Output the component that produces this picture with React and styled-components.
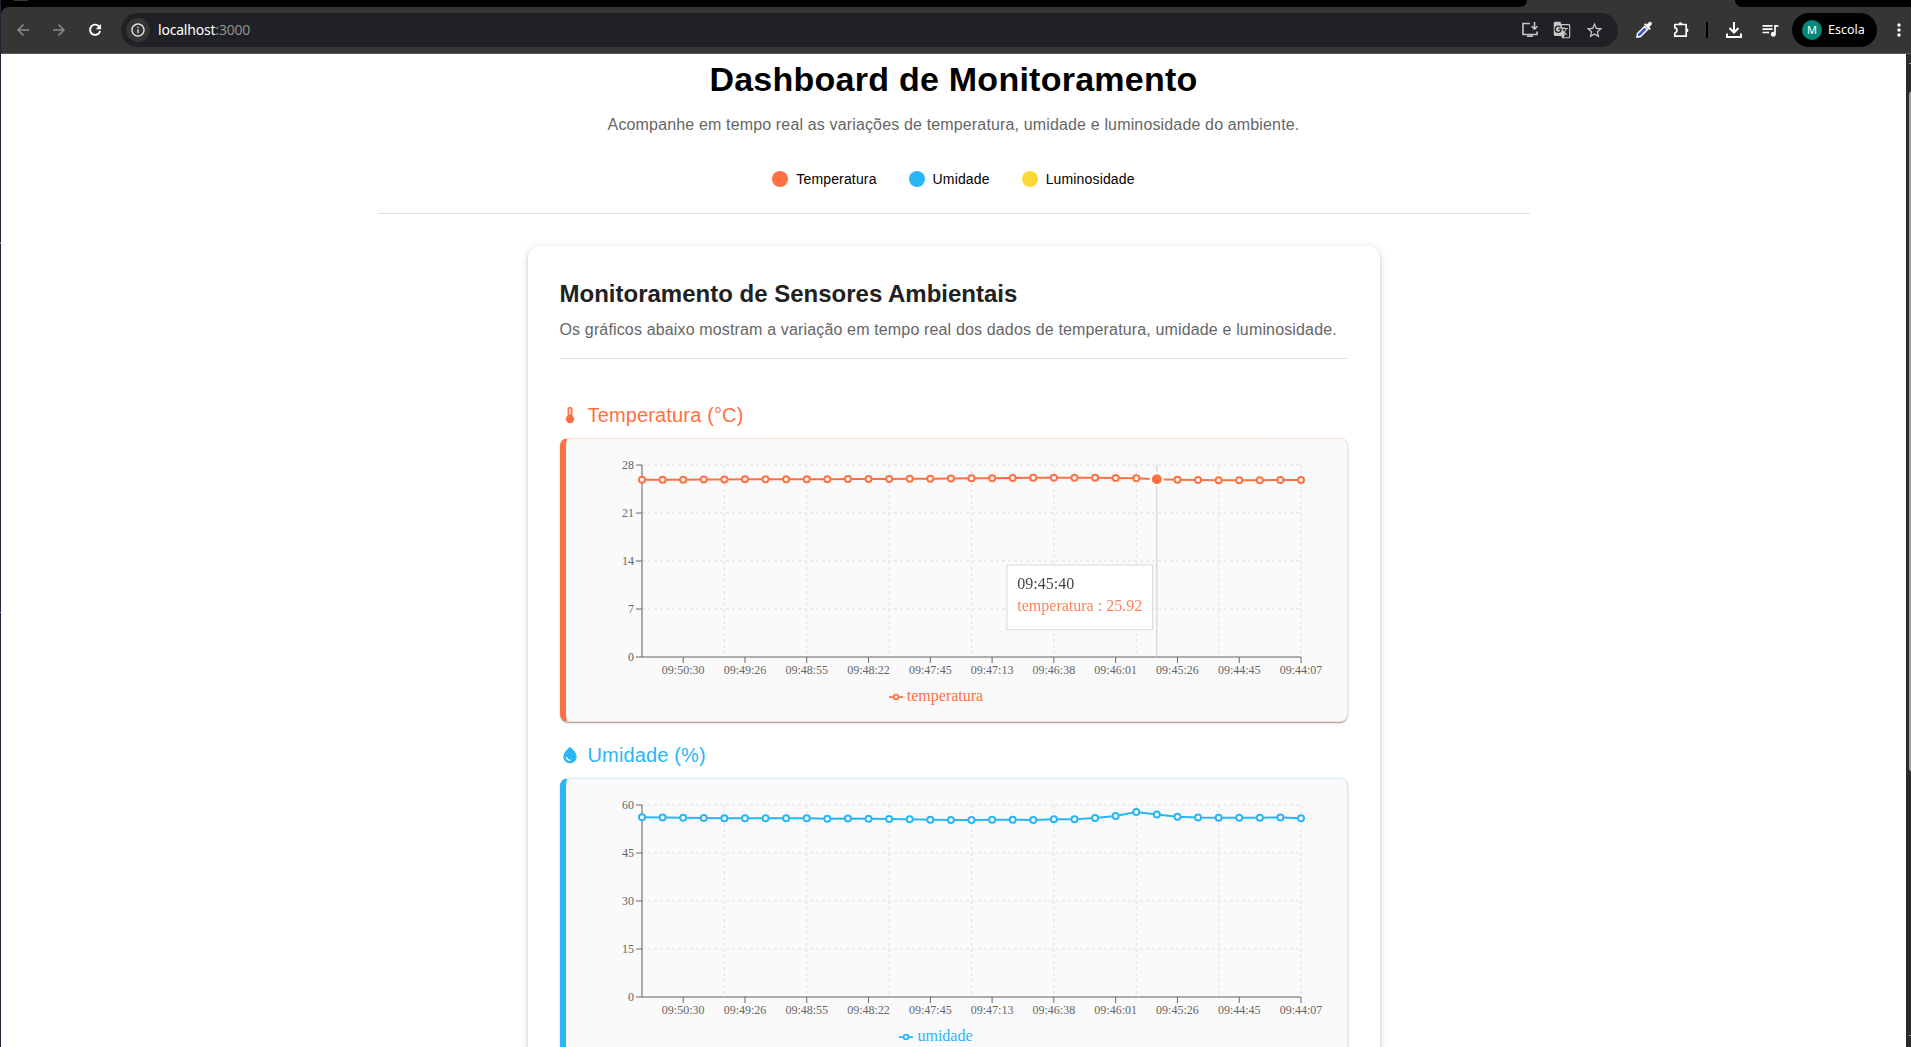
import React from "react";
import styled, { createGlobalStyle } from "styled-components";
import {
  MdArrowBack, MdArrowForward, MdInfoOutline, MdGTranslate, MdStarBorder,
  MdQueueMusic, MdMoreVert,
} from "react-icons/md";

const GlobalStyle = createGlobalStyle`
  * { box-sizing: border-box; }
  body { margin: 0; background: #fff; overflow: hidden; }
`;

const sans = `"Liberation Sans", Arial, sans-serif`;
const serif = `"Liberation Serif", "Times New Roman", serif`;
const ui = `"Noto Sans", sans-serif`;

const Desktop = styled.div`
  width: 1911px;
  height: 1047px;
  display: flex;
  background: #252336;
  overflow: hidden;
`;

const DesktopEdge = styled.div`
  width: 1px;
  display: flex;
  flex-direction: column;
  flex: none;
`;

const EdgeMark = styled.i`
  height: ${(p) => p.$h}px;
  margin-top: ${(p) => p.$gap}px;
  background: ${(p) => p.$color};
`;

const Window = styled.div`
  flex: 1;
  display: flex;
  flex-direction: column;
  min-width: 0;
`;

const TabStrip = styled.div`
  height: 7px;
  flex: none;
  display: flex;
  background: #353535;
`;

const StripPart = styled.div`
  width: ${(p) => p.$w};
  flex: ${(p) => (p.$w ? "none" : 1)};
  background: #000;
  border-radius: ${(p) => p.$radius};
`;

const TabHighlight = styled.div`
  width: 14px;
  height: 1px;
  margin-left: 13px;
  background: #3a3a3a;
`;

const StripGap = styled.div`
  width: 208px;
`;

const ToolbarBase = styled.div`
  height: 47px;
  flex: none;
  background: #000;
`;

const Toolbar = styled.div`
  height: 47px;
  display: flex;
  align-items: center;
  background: #353535;
  border-bottom: 1px solid #5c5c5c;
  border-top-left-radius: 8px;
  padding-left: 12px;
  color: #fff;
`;

const NavIcon = styled.span`
  display: flex;
  justify-content: center;
  width: 20px;
  margin-right: ${(p) => p.$after}px;
  color: ${(p) => (p.$dim ? "#8a8a8a" : "#fff")};
`;

const AddressBar = styled.div`
  width: 1497px;
  height: 34px;
  display: flex;
  align-items: center;
  gap: 14px;
  padding: 0 14px 0 5px;
  background: #202125;
  border-radius: 17px;
  color: #c7c7c7;
`;

const SiteInfo = styled.span`
  width: 24px;
  height: 24px;
  display: flex;
  align-items: center;
  justify-content: center;
  border-radius: 50%;
  background: #353535;
  color: #e8e8e8;
`;

const Url = styled.span`
  flex: 1;
  margin-left: -6px;
  font: 14px/20px ${ui};
  letter-spacing: -0.2px;
  color: #fff;
`;

const Port = styled.span`
  color: #909090;
`;

const BarIcon = styled.span`
  width: 20px;
  display: flex;
  justify-content: center;
  margin-left: ${(p) => p.$before}px;
  flex: none;
`;

const Separator = styled.span`
  width: 2px;
  height: 16px;
  margin-left: 15px;
  background: #000;
`;

const Profile = styled.div`
  width: 85px;
  height: 34px;
  margin-left: 12px;
  display: flex;
  align-items: center;
  gap: 6px;
  padding-left: 10px;
  background: #000;
  border-radius: 17px;
  font: 12.5px/20px ${ui};
`;

const Avatar = styled.span`
  width: 20px;
  height: 20px;
  border-radius: 50%;
  background: #00897b;
  text-align: center;
  font: 11px/20px ${ui};
`;

const Viewport = styled.div`
  flex: 1;
  min-height: 0;
  display: flex;
`;

const Page = styled.main`
  flex: 1;
  height: 993px;
  overflow: hidden;
  background: #fff;
  font-family: ${sans};
`;

const Scrollbar = styled.div`
  width: 5px;
  padding: 9px 0 0 3px;
  background: #2b2b2b;
  overflow: hidden;
`;

const ArrowHint = styled.div`
  width: 2px;
  height: 1px;
  margin-top: ${(p) => p.$gap}px;
  background: #9f9f9f;
`;

const Thumb = styled.div`
  width: 10px;
  height: 681px;
  margin-top: 27px;
  border-radius: 4px;
  background: #9f9f9f;
`;

const Header = styled.header`
  width: 1152px;
  margin: 0 auto;
  padding-top: 4px;
  text-align: center;
  border-bottom: 1px solid #e0e0e0;
  height: 160px;
`;

const Title = styled.h1`
  margin: 0;
  font-size: 34px;
  line-height: 42px;
  font-weight: 700;
  letter-spacing: 0.00735em;
  color: #000;
`;

const Subtitle = styled.p`
  margin: 13px 0 0;
  font-size: 16px;
  line-height: 24px;
  letter-spacing: 0.00938em;
  color: #666;
`;

const Legend = styled.div`
  display: flex;
  justify-content: center;
  gap: 32px;
  margin-top: 32px;
`;

const LegendItem = styled.div`
  display: flex;
  align-items: center;
  gap: 8px;
  font-size: 14px;
  line-height: 20px;
  letter-spacing: 0.01071em;
  color: #000;
`;

const Swatch = styled.span`
  width: 16px;
  height: 16px;
  border-radius: 50%;
  background: ${(p) => p.$color};
`;

const Card = styled.section`
  width: 852px;
  height: 1200px;
  margin: 32px auto 0;
  padding: 32px;
  border-radius: 12px;
  background: #fff;
  box-shadow: 0 3px 3px -2px rgba(0, 0, 0, 0.2), 0 3px 4px rgba(0, 0, 0, 0.14), 0 1px 8px rgba(0, 0, 0, 0.12);
`;

const CardTitle = styled.h2`
  margin: 0;
  font-size: 24px;
  line-height: 32px;
  font-weight: 700;
  color: #212121;
`;

const CardText = styled.p`
  margin: 8px 0 16px;
  font-size: 16px;
  line-height: 24px;
  letter-spacing: 0.00938em;
  color: #666;
`;

const Rule = styled.hr`
  margin: 0 0 40px;
  border: 0;
  border-top: 1px solid #e0e0e0;
`;

const Sensor = styled.article`
  height: 340px;
`;

const SensorTitle = styled.h3`
  display: flex;
  align-items: center;
  gap: 8px;
  height: 32px;
  margin: 0 0 7px;
  font-size: 20px;
  font-weight: 400;
  letter-spacing: 0.0075em;
  color: ${(p) => p.$color};
`;

const ChartPanel = styled.div`
  position: relative;
  height: 284px;
  padding: 16px;
  background: #fafafa;
  border: 1px solid ${(p) => p.$color}33;
  border-left: 6px solid ${(p) => p.$color};
  border-radius: 8px;
  box-shadow: 0 2px 1px -1px rgba(0, 0, 0, 0.2), 0 1px 1px rgba(0, 0, 0, 0.14), 0 1px 3px rgba(0, 0, 0, 0.12);
`;

const ChartSvg = styled.svg`
  display: block;
  overflow: visible;
  text {
    font: 12px ${serif};
    fill: #666;
  }
`;

const ChartLegend = styled.div`
  display: flex;
  justify-content: center;
  align-items: center;
  width: 719px;
  height: 18px;
  padding-right: 10px;
  font: 16px/18px ${serif};
  color: ${(p) => p.$color};
  svg { margin: 2px 4px 0 0; }
`;

const Tooltip = styled.div`
  position: absolute;
  left: 16px;
  top: 16px;
  transform: translate(424.3px, 109.4px);
  will-change: transform;
  padding: 10px;
  background: #fff;
  border: 1px solid #ccc;
  white-space: nowrap;
  font: 16px/18px ${serif};
  color: rgba(0, 0, 0, 0.75);
`;

const TooltipValue = styled.div`
  padding: 4px 0;
  color: ${(p) => p.$color}e0;
`;

const LABELS = ["09:50:30", "09:49:26", "09:48:55", "09:48:22", "09:47:45", "09:47:13", "09:46:38", "09:46:01", "09:45:26", "09:44:45", "09:44:07"];

const TEMPERATURE = [25.84, 25.84, 25.86, 25.89, 25.89, 25.91, 25.91, 25.93, 25.93, 25.93, 25.96, 25.96, 25.97, 26.0, 26.0, 26.02, 26.06, 26.08, 26.11, 26.13, 26.15, 26.15, 26.13, 26.09, 26.06, 25.92, 25.86, 25.81, 25.79, 25.79, 25.79, 25.81, 25.83];

const HUMIDITY = [56.15, 56.09, 56.04, 55.94, 55.89, 55.83, 55.83, 55.83, 55.83, 55.73, 55.78, 55.68, 55.63, 55.52, 55.42, 55.31, 55.31, 55.42, 55.42, 55.31, 55.52, 55.52, 55.94, 56.56, 57.81, 57.03, 56.35, 56.09, 55.99, 56.04, 56.04, 56.09, 55.88];

const X0 = 60;
const PLOT_W = 659;
const Y0 = 10;
const PLOT_H = 192;
const xAt = (i) => X0 + (PLOT_W * i) / 32;

function Chart({ data, max, color, active }) {
  const yAt = (v) => Y0 + PLOT_H * (1 - v / max);
  const ticks = [0, 1, 2, 3, 4].map((n) => ({ value: (max / 4) * n, y: Y0 + PLOT_H - 48 * n }));
  const points = data.map((v, i) => `${xAt(i)},${yAt(v)}`).join(" ");
  return (
    <ChartSvg width="749" height="232">
      <g stroke="#e0e0e0" strokeDasharray="3 3">
        {ticks.map((t) => <line key={t.y} x1={X0} x2={X0 + PLOT_W} y1={t.y} y2={t.y} />)}
        {[0, 4, 8, 12, 16, 20, 24, 28, 32].map((i) => <line key={i} x1={xAt(i)} x2={xAt(i)} y1={Y0} y2={Y0 + PLOT_H} />)}
      </g>
      <g stroke="#666">
        <line x1={X0} x2={X0 + PLOT_W} y1={202} y2={202} />
        <line x1={X0} x2={X0} y1={Y0} y2={202} />
        {ticks.map((t) => <line key={t.y} x1={54} x2={60} y1={t.y} y2={t.y} />)}
        {LABELS.map((l, n) => <line key={l} x1={xAt(2 + 3 * n)} x2={xAt(2 + 3 * n)} y1={202} y2={208} />)}
      </g>
      {ticks.map((t) => <text key={t.y} x={52} y={t.y} dy="0.355em" textAnchor="end">{t.value}</text>)}
      {LABELS.map((l, n) => <text key={l} x={xAt(2 + 3 * n)} y={210} dy="0.71em" textAnchor="middle">{l}</text>)}
      {active !== undefined && <line x1={xAt(active)} x2={xAt(active)} y1={Y0} y2={202} stroke="#ccc" />}
      <polyline points={points} fill="none" stroke={color} strokeWidth="2" />
      {data.map((v, i) => <circle key={i} cx={xAt(i)} cy={yAt(v)} r="3" fill="#fff" stroke={color} strokeWidth="2" />)}
      {active !== undefined && <circle cx={xAt(active)} cy={yAt(data[active])} r="6" fill={color} stroke="#fff" strokeWidth="2" />}
    </ChartSvg>
  );
}

function SensorSection({ title, icon, name, color, tooltip, ...chart }) {
  return (
    <Sensor>
      <SensorTitle $color={color}>{icon}{title}</SensorTitle>
      <ChartPanel $color={color}>
        <Chart color={color} {...chart} />
        <ChartLegend $color={color}>
          <svg width="14" height="14" viewBox="0 0 32 32" fill="none" stroke={color} strokeWidth="4">
            <path d="M0,16h10.667A5.333,5.333,0,1,1,21.333,16H32M21.333,16A5.333,5.333,0,1,1,10.667,16" />
          </svg>
          {name}
        </ChartLegend>
        {tooltip && (
          <Tooltip>
            {tooltip.time}
            <TooltipValue $color={color}>{name} : {tooltip.value}</TooltipValue>
          </Tooltip>
        )}
      </ChartPanel>
    </Sensor>
  );
}

const Thermometer = (
  <svg width="20" height="20" viewBox="0 0 24 24" fill="currentColor">
    <path d="M15 13V5c0-1.66-1.34-3-3-3S9 3.340 9 5v8c-1.210.910-2 2.370-2 4 0 2.760 2.240 5 5 5s5-2.240 5-5c0-1.630-.79-3.090-2-4zm-4-8c0-.55.450-1 1-1s1 .450 1 1h-1v1h1v2h-1v1h1v2h-2V5z" />
  </svg>
);

const Drop = (
  <svg width="20" height="20" viewBox="0 0 24 24" fill="currentColor">
    <path d="M12 2c-5.330 4.550-8 8.480-8 11.800 0 4.980 3.800 8.200 8 8.200s8-3.220 8-8.200c0-3.320-2.670-7.250-8-11.800zM7.830 14c.370 0 .670.260.740.620.410 2.220 2.280 2.980 3.640 2.870.430-.020.790.320.790.750 0 .400-.320.730-.720.750-2.130.130-4.620-1.090-5.190-4.120-.080-.450.280-.870.740-.870z" />
  </svg>
);

export default function App() {
  return (
    <Desktop>
      <GlobalStyle />
      <DesktopEdge>
        <EdgeMark $gap={242} $h={2} $color="#85838f" />
        <EdgeMark $gap={368} $h={1} $color="#a78bda" />
      </DesktopEdge>
      <Window>
        <TabStrip>
          <StripPart $w="1526px" $radius="0 0 10px 0"><TabHighlight /></StripPart>
          <StripGap />
          <StripPart $radius="0 0 0 10px" />
        </TabStrip>
        <ToolbarBase>
          <Toolbar>
            <NavIcon $dim $after={16}><MdArrowBack size={18} /></NavIcon>
            <NavIcon $dim $after={16}><MdArrowForward size={18} /></NavIcon>
            <NavIcon $after={16}>
              <svg width="18" height="18" viewBox="0 0 18 18" fill="none" stroke="currentColor" strokeWidth="1.900">
                <path d="M13.300 5.800a5.100 5.100 0 1 0 .8 4.200" />
                <path d="M15 3v5.300H9.700z" fill="currentColor" stroke="none" />
              </svg>
            </NavIcon>
            <AddressBar>
              <SiteInfo><MdInfoOutline size={16} /></SiteInfo>
              <Url>localhost<Port>:3000</Port></Url>
              <svg width="18" height="18" viewBox="0 0 18 18" fill="none" stroke="currentColor" strokeWidth="1.6">
                <path d="M9 2.500H2v11H16V10.500M6 15.200h6M13.500 1v7M10.700 5.300l2.800 2.800 2.800-2.800" />
              </svg>
              <MdGTranslate size={18} />
              <MdStarBorder size={19} />
            </AddressBar>
            <BarIcon $before={16}>
              <svg width="18" height="18" viewBox="0 0 18 18">
                <path d="M2 16l.5-3.500 7-7 3 3-7 7z" fill="#3f51d5" stroke="#fff" strokeWidth="1.500" />
                <path d="M9 3.500l5.500 5.500 1.300-1.300-1.600-1.600 2.300-2.300c1.500-1.500-1-4-2.500-2.500l-2.300 2.300-1.400-1.400z" fill="#fff" />
              </svg>
            </BarIcon>
            <BarIcon $before={17}>
              <svg width="18" height="18" viewBox="0 0 18 18" fill="none" stroke="currentColor" strokeWidth="1.700" strokeLinejoin="round">
                <path d="M2.800 3.500h11.400v11.700H2.800v-3.200a2.700 2.700 0 0 0 0-5.300z" />
                <path d="M6.700 3a1.850 1.850 0 0 1 3.700 0zM14.600 7.400a1.850 1.850 0 0 1 0 3.700z" fill="currentColor" stroke="none" />
              </svg>
            </BarIcon>
            <Separator />
            <BarIcon $before={16}>
              <svg width="18" height="18" viewBox="0 0 18 18" fill="none" stroke="currentColor" strokeWidth="2">
                <path d="M9 1v10M4.500 7L9 11.500 13.500 7M2 12.500V16h14v-3.500" />
              </svg>
            </BarIcon>
            <BarIcon $before={16}><MdQueueMusic size={20} /></BarIcon>
            <Profile><Avatar>M</Avatar>Escola</Profile>
            <BarIcon $before={12}><MdMoreVert size={20} /></BarIcon>
          </Toolbar>
        </ToolbarBase>
        <Viewport>
          <Page>
            <Header>
              <Title>Dashboard de Monitoramento</Title>
              <Subtitle>Acompanhe em tempo real as variações de temperatura, umidade e luminosidade do ambiente.</Subtitle>
              <Legend>
                <LegendItem><Swatch $color="#ff7043" />Temperatura</LegendItem>
                <LegendItem><Swatch $color="#29b6f6" />Umidade</LegendItem>
                <LegendItem><Swatch $color="#fdd835" />Luminosidade</LegendItem>
              </Legend>
            </Header>
            <Card>
              <CardTitle>Monitoramento de Sensores Ambientais</CardTitle>
              <CardText>Os gráficos abaixo mostram a variação em tempo real dos dados de temperatura, umidade e luminosidade.</CardText>
              <Rule />
              <SensorSection
                title="Temperatura (°C)" icon={Thermometer} name="temperatura" color="#ff7043"
                data={TEMPERATURE} max={28} active={25} tooltip={{ time: "09:45:40", value: "25.92" }}
              />
              <SensorSection title="Umidade (%)" icon={Drop} name="umidade" color="#29b6f6" data={HUMIDITY} max={60} />
            </Card>
          </Page>
          <Scrollbar>
            <ArrowHint $gap={0} />
            <Thumb />
            <ArrowHint $gap={263} />
          </Scrollbar>
        </Viewport>
      </Window>
    </Desktop>
  );
}
